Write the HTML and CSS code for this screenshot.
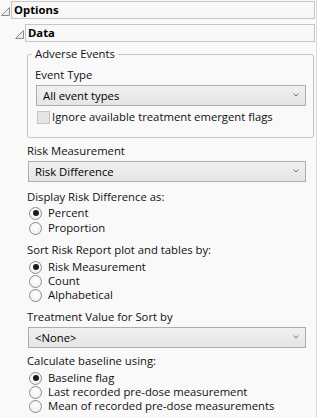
FILE: index.html
```html
<!DOCTYPE html>
<html lang="en">
<head>
    <meta charset="UTF-8">
    <title>Options</title>
    <link rel="stylesheet" href="styles.css">
</head>
<body>
    <div class="panel">
        <div class="outline">
            <div class="outline-head top">
                <svg class="disclosure" width="11" height="11" viewBox="0 0 11 11"><path d="M1.5 9.5 L9.5 1.5 L9.5 9.5 Z" fill="#ececec" stroke="#8c8c8c" stroke-width="1"/></svg>
                <div class="outline-title">Options</div>
            </div>
            <div class="outline sub">
                <div class="outline-head">
                    <svg class="disclosure" width="11" height="11" viewBox="0 0 11 11"><path d="M1.5 9.5 L9.5 1.5 L9.5 9.5 Z" fill="#ececec" stroke="#8c8c8c" stroke-width="1"/></svg>
                    <div class="outline-title">Data</div>
                </div>
                <div class="data-body">
                    <fieldset class="group">
                        <legend>Adverse Events</legend>
                        <div class="label">Event Type</div>
                        <div class="combo">
                            <span>All event types</span>
                            <svg class="chevron" width="6" height="4" viewBox="0 0 6 4"><path d="M0.5 0.5 L3 3 L5.5 0.5" fill="none" stroke="#707070" stroke-width="1"/></svg>
                        </div>
                        <div class="check disabled"><span class="box"></span>Ignore available treatment emergent flags</div>
                    </fieldset>

                    <div class="label gap-lg">Risk Measurement</div>
                    <div class="combo">
                        <span>Risk Difference</span>
                        <svg class="chevron" width="6" height="4" viewBox="0 0 6 4"><path d="M0.5 0.5 L3 3 L5.5 0.5" fill="none" stroke="#707070" stroke-width="1"/></svg>
                    </div>

                    <div class="label gap-xl">Display Risk Difference as:</div>
                    <div class="radios loose">
                        <div class="radio checked"><span class="dot"></span>Percent</div>
                        <div class="radio"><span class="dot"></span>Proportion</div>
                    </div>

                    <div class="label gap-xl">Sort Risk Report plot and tables by:</div>
                    <div class="radios">
                        <div class="radio checked"><span class="dot"></span>Risk Measurement</div>
                        <div class="radio"><span class="dot"></span>Count</div>
                        <div class="radio"><span class="dot"></span>Alphabetical</div>
                    </div>

                    <div class="label gap-xl">Treatment Value for Sort by</div>
                    <div class="combo">
                        <span>&lt;None&gt;</span>
                        <svg class="chevron" width="6" height="4" viewBox="0 0 6 4"><path d="M0.5 0.5 L3 3 L5.5 0.5" fill="none" stroke="#707070" stroke-width="1"/></svg>
                    </div>

                    <div class="label gap-lg">Calculate baseline using:</div>
                    <div class="radios">
                        <div class="radio checked"><span class="dot"></span>Baseline flag</div>
                        <div class="radio"><span class="dot"></span>Last recorded pre-dose measurement</div>
                        <div class="radio"><span class="dot"></span>Mean of recorded pre-dose measurements</div>
                    </div>
                </div>
            </div>
        </div>
    </div>
</body>
</html>
```

FILE: styles.css
```css
html, body {
    margin: 0;
    padding: 0;
}
body {
    background: #f9f9f9;
    font-family: "Open Sans", "Noto Sans", sans-serif;
    font-size: 11.3px;
    line-height: 14px;
    color: #111;
    overflow: hidden;
}
.panel {
    width: 317px;
    height: 417px;
    box-sizing: border-box;
    border-right: 1px solid #dcdcdc;
}

/* outline headers */
.outline-head {
    display: flex;
    align-items: center;
    margin-right: 1px;
}
.outline-head.top {
    padding-top: 1px;
}
.sub > .outline-head {
    margin-top: 5px;
    padding-left: 14px;
}
.disclosure {
    flex: none;
    width: 11px;
    height: 11px;
    margin-top: 3px;
}
.outline-title {
    flex: 1;
    height: 18px;
    box-sizing: border-box;
    border: 1px solid #c6c6c6;
    background: #f8f8f8;
    padding-left: 2px;
    font-weight: bold;
    line-height: 16px;
    color: #000;
}

.data-body {
    padding: 0 2px 0 27px;
}

/* group box */
.group {
    margin: 5px 0 0 0;
    padding: 7px 7px 13px 7px;
    border: 1px solid #c6c6c6;
    border-radius: 3px;
    min-width: 0;
}
.group legend {
    padding: 0 3px;
    margin-left: -3px;
    line-height: 14px;
}
.group .combo {
    margin-right: 0;
}

.label {
    margin-top: 7px;
}
.group .label {
    margin-top: 0;
}
.gap-lg {
    margin-top: 6px;
}
.gap-xl {
    margin-top: 8px;
}

/* combo box */
.combo {
    display: flex;
    align-items: center;
    justify-content: space-between;
    height: 21px;
    box-sizing: border-box;
    margin: 3px 8px 0 1px;
    padding: 0 6px 0 6px;
    border: 1px solid #adadad;
    background: linear-gradient(#f0f0f0, #e5e5e5);
    color: #000;
}
.chevron {
    margin-top: -1px;
}

/* checkbox */
.check {
    display: flex;
    align-items: center;
    margin-top: 4px;
    margin-left: 2px;
    height: 14px;
}
.check .box {
    width: 13px;
    height: 13px;
    box-sizing: border-box;
    border: 1px solid #c4c4c4;
    background: #e6e6e6;
    margin-right: 2px;
}

/* radio buttons */
.radios {
    margin-top: 3px;
}
.radios.loose {
    margin-top: 2px;
    display: flex;
    flex-direction: column;
    gap: 1px;
}
.radio {
    display: flex;
    align-items: center;
    height: 14px;
}
.radio .dot {
    position: relative;
    width: 13px;
    height: 13px;
    box-sizing: border-box;
    margin-left: 2px;
    margin-right: 6px;
    border: 1px solid #8a8a8a;
    border-radius: 50%;
    background: radial-gradient(circle at 50% 40%, #ffffff, #ececec);
}
.radio.checked .dot::after {
    content: "";
    position: absolute;
    left: 2.5px;
    top: 2.5px;
    width: 6px;
    height: 6px;
    border-radius: 50%;
    background: #1a1a1a;
}
```
